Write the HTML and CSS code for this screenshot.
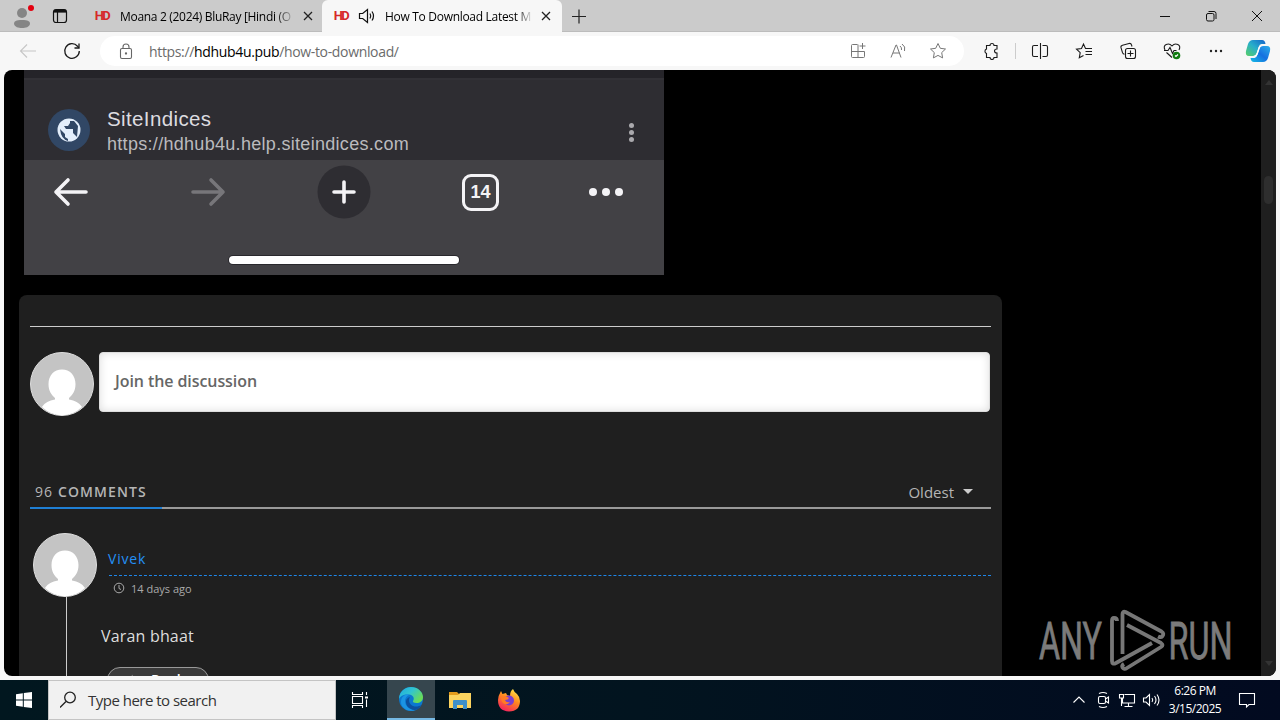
FILE: index.html
```html
<!DOCTYPE html>
<html lang="en">
<head>
  <meta charset="UTF-8">
  <meta name="viewport" content="width=device-width, initial-scale=1.0">
  <link rel="stylesheet" href="styles.css">
  <title>How To Download Latest Movies</title>
</head>
<body>
  <!-- Tab strip -->
  <div class="tabstrip">
    <div class="cell profile">
      <svg width="28" height="28" viewBox="0 0 28 28"><g fill="#858585"><circle cx="14" cy="11" r="5"/><path d="M6 22c0-3 2-4 8-4s8 1 8 4c-1 3-4 4-8 4s-7-1-8-4z"/></g><circle cx="23" cy="6" r="3" fill="#e3000f"/></svg>
    </div>
    <div class="cell tabs-menu">
      <svg width="16" height="16" viewBox="0 0 16 16" fill="none" stroke="#111" stroke-width="1.2"><rect x="1.5" y="1.5" width="13" height="13" rx="2.5"/><path d="M1.5 4h13M5.5 4v10"/><path d="M2 3h12" stroke-width="2.4"/></svg>
    </div>
    <div class="tab">
      <span class="hd">HD</span>
      <span class="tab-title first">Moana 2 (2024) BluRay [Hindi (O</span>
      <svg class="close" width="10" height="10" viewBox="0 0 10 10"><path d="M1 1l8 8M9 1l-8 8"/></svg>
    </div>
    <div class="tab active">
      <span class="hd">HD</span>
      <svg class="sound" width="18" height="16" viewBox="0 0 18 16" fill="none" stroke="#111" stroke-width="1.2"><path d="M1.5 5.5h3.2L9.5 1.5v13L4.7 10.5H1.5z"/><path d="M12 5.5q1.5 2.500 0 5M14 3.500q3 4.500 0 9"/></svg>
      <span class="tab-title second">How To Download Latest M</span>
      <svg class="close" width="10" height="10" viewBox="0 0 10 10"><path d="M1 1l8 8M9 1l-8 8"/></svg>
    </div>
    <div class="cell new-tab">
      <svg width="16" height="16" viewBox="0 0 16 16" stroke="#222" stroke-width="1.2"><path d="M1 8.500h14M8 1.500v14"/></svg>
    </div>
    <div class="window-buttons">
      <svg width="46" height="32" viewBox="0 0 46 32"><path d="M18 16.500h10"/></svg>
      <svg width="46" height="32" viewBox="0 0 46 32"><rect x="18.500" y="13.500" width="7.500" height="7.500" rx="1.500"/><path d="M20.500 11.500h5.500q2 0 2 2v5.500"/></svg>
      <svg width="46" height="32" viewBox="0 0 46 32"><path d="M18 11l10 10M28 11l-10 10"/></svg>
    </div>
  </div>

  <!-- Toolbar -->
  <div class="toolbar">
    <div class="cell back"><svg width="18" height="16" viewBox="0 0 18 16" fill="none" stroke="#c6c6c6" stroke-width="1.1"><path d="M17 8H1.500M8 1.500L1.500 8 8 14.500"/></svg></div>
    <div class="cell reload"><svg width="18" height="18" viewBox="0 0 18 18" fill="none" stroke="#1b1b1b" stroke-width="1.3"><path d="M16.300 9A7.300 7.300 0 1 1 14.500 4.200L15.800 5.800"/><path d="M16 1.500v4.500h-4.500"/></svg></div>
    <div class="address">
      <svg class="lock" width="14" height="17" viewBox="0 0 14 17" fill="none" stroke="#666" stroke-width="1.1"><rect x="1.500" y="5.500" width="11" height="10" rx="1.500"/><path d="M4 5.500V4a3 3 0 0 1 6 0v1.500"/><circle cx="7" cy="10.500" r=".6" fill="#555"/></svg>
      <span class="url">https://<b>hdhub4u.pub</b>/how-to-download/</span>
      <div class="address-icons">
        <svg width="18" height="16" viewBox="0 0 16 16"><path d="M7.500 1.500h-5a1 1 0 0 0-1 1v11a1 1 0 0 0 1 1h11a1 1 0 0 0 1-1v-5h-13M8 1.500v13M12.500 0v6M9.500 3h6"/></svg>
        <svg width="16" height="16" viewBox="0 0 16 16"><path d="M1 14.500L6 2h.5l4.500 12.500M3 10h6.500M10 3q2 1.500 1.500 4M12 1q4 2.500 2.500 7"/></svg>
        <svg width="18" height="18" viewBox="0 0 18 18"><path d="M9 1.500l2.300 4.800 5.200.7-3.800 3.600.9 5.300L9 13.400l-4.600 2.500.9-5.300L1.500 7l5.200-.7z"/></svg>
      </div>
    </div>
    <div class="tools">
      <svg class="puzzle" width="18" height="18" viewBox="0 0 18 18"><path d="M4.500 3.500H8a2 2 0 0 1 4 0h3V7q-2.500 0-2.500 2t2.500 2v4.500h-3a2 2 0 0 1-4 0H4.500V11.500a2.400 2.400 0 0 1 0-4.500z"/></svg>
      <span class="divider"></span>
      <svg width="18" height="18" viewBox="0 0 18 18"><path d="M7 3.500H3a1.500 1.500 0 0 0-1.500 1.500v8A1.500 1.500 0 0 0 3 14.500h4M9.500 1v16M11.500 3.500H15a1.500 1.500 0 0 1 1.500 1.500v8a1.500 1.500 0 0 1-1.500 1.500h-3.500"/></svg>
      <svg width="18" height="18" viewBox="0 0 18 18"><path d="M16 6.500h-5.500L8.500 2 6.500 6.500l-5 .700 3.700 3.500-.9 5 4.200-2.200M10.500 6.500H17M10.500 9.500H17M10.500 12.500H17"/></svg>
      <svg width="18" height="18" viewBox="0 0 18 18"><path d="M13 4.500l-.4-1.400Q12 1 10 1.500l-6.500 1.700q-2 .5-1.500 2.500l1.500 5q.5 1.500 2 1.500"/><rect x="6.500" y="6.500" width="10" height="10" rx="2"/><path d="M11.500 8.500v6M8.500 11.500h6"/></svg>
      <svg width="18" height="18" viewBox="0 0 18 18"><path d="M2 8Q0 4 3.200 2.500 6.500 1 9 4q2.500-3 5.800-1.500Q18 4 16 8M1 8.500h4l2-3 2.500 6L11 8.500h2.500M3.500 10.500l5.500 5"/><circle cx="13.500" cy="13.500" r="3.800" fill="#107c10" stroke="none"/><path d="M12 13.500l1 1 2-2" stroke="#fff"/></svg>
      <svg width="18" height="18" viewBox="0 0 18 18"><g fill="#222" stroke="none"><circle cx="3" cy="9" r="1.200"/><circle cx="8" cy="9" r="1.200"/><circle cx="13" cy="9" r="1.200"/></g></svg>
      <svg class="copilot" width="26" height="24" viewBox="0 0 26 24">
        <defs>
          <linearGradient id="cpA" x1="0" y1="1" x2="1" y2="0"><stop offset="0" stop-color="#58cf65"/><stop offset=".5" stop-color="#28aecb"/><stop offset="1" stop-color="#1462c9"/></linearGradient>
          <linearGradient id="cpB" x1="0" y1="1" x2="1" y2="0"><stop offset="0" stop-color="#16bce6"/><stop offset=".5" stop-color="#1670e0"/><stop offset="1" stop-color="#2dafe9"/></linearGradient>
        </defs>
        <path d="M8 1h9q3 0 3.500 4h-4q-2 0-2.800 3l-2 6q-1 3-4 3H4q-4 0-3-5l2-7q1.500-4 5-4z" fill="url(#cpA)" stroke="none"/>
        <path d="M18 23H9q-3 0-3.500-4h4q2 0 2.800-3l2-6q1-3 4-3H22q4 0 3 5l-2 7q-1.500 4-5 4z" fill="url(#cpB)" stroke="none"/>
        <path d="M13.700 8l-2 6q-.8 3-3 3h2.500q1.500-1 2-3l2-6q.6-1 1.600-1H16q-1.600 0-2.300 1z" fill="#fff" stroke="none"/>
      </svg>
    </div>
  </div>

  <!-- Web page -->
  <div class="viewport">
    <div class="page">
      <div class="phone">
        <div class="phone-top"></div>
        <div class="site">
          <svg class="globe" width="42" height="42" viewBox="0 0 42 42"><circle cx="21" cy="21" r="21" fill="#314765"/><circle cx="21" cy="21" r="11.500" fill="#e3eefb"/><path d="M22 12h4l4 5-1 11-4-4v-4h-7l-2-3h4l2-3zM12 20l5 5v3l3 2v2q-7-2-8-12z" fill="#314765"/></svg>
          <div class="site-text">
            <div class="site-name">SiteIndices</div>
            <div class="site-url">https://hdhub4u.help.siteindices.com</div>
          </div>
          <div class="kebab"><i></i><i></i><i></i></div>
        </div>
        <div class="phone-nav">
          <svg width="36" height="30" viewBox="0 0 36 30" stroke="#f4f3f6"><path d="M33 15H3M15 3L3 15l12 12"/></svg>
          <svg class="forward" width="36" height="30" viewBox="0 0 36 30" stroke="#77767a"><path d="M3 15h30M21 3l12 12-12 12"/></svg>
          <svg class="plus" width="54" height="54" viewBox="0 0 54 54" stroke="#f4f3f6"><circle cx="27" cy="27" r="26.500" fill="#2e2d32" stroke="none"/><path d="M17 27h20M27 17v20"/></svg>
          <span class="count">14</span>
          <div class="more"><i></i><i></i><i></i></div>
        </div>
        <div class="home-bar"></div>
      </div>

      <div class="comments">
        <hr>
        <div class="join">
          <svg class="avatar" viewBox="0 0 64 64"><circle cx="32" cy="32" r="31.500" fill="#c4c4c4" stroke="#ddd"/><path d="M32 17.500c8 0 13.500 6 13.500 14.500 0 7-3 11-6.500 14v1.500c6 1 10 3 13 7.500Q43 63.300 32 63.300T12 55c3-4.500 7-6.500 13-7.500V46c-3.500-3-6.500-7-6.500-14 0-8.500 5.500-14.500 13.500-14.500z" fill="#fff"/></svg>
          <div class="join-box">Join the discussion</div>
        </div>
        <div class="threads-head">
          <div class="threads-count">96 <b>COMMENTS</b></div>
          <div class="sort">Oldest <span class="caret"></span></div>
        </div>
        <div class="comment">
          <div class="comment-left">
            <svg class="avatar" viewBox="0 0 64 64"><circle cx="32" cy="32" r="31.500" fill="#c4c4c4" stroke="#ddd"/><path d="M32 17.500c8 0 13.500 6 13.500 14.500 0 7-3 11-6.500 14v1.500c6 1 10 3 13 7.500Q43 63.300 32 63.300T12 55c3-4.500 7-6.500 13-7.500V46c-3.500-3-6.500-7-6.500-14 0-8.500 5.500-14.500 13.500-14.500z" fill="#fff"/></svg>
            <div class="thread-line"></div>
          </div>
          <div class="comment-right">
            <div class="author">Vivek</div>
            <div class="date"><svg width="12" height="12" viewBox="0 0 12 12" fill="none" stroke="#aaa"><circle cx="6" cy="6" r="4.800"/><path d="M6 3v3.500l2 1"/></svg><span>14 days ago</span></div>
            <div class="text">Varan bhaat</div>
            <div class="reply"><svg width="16" height="12" viewBox="0 0 16 12" fill="none" stroke="#777"><path d="M6 1L1 5l5 4M1 5h8q4 0 5 5"/></svg>Reply</div>
          </div>
        </div>
      </div>
    </div>
    <div class="scrollbar">
      <span class="arrow up"></span>
      <span class="thumb"></span>
      <span class="arrow down"></span>
    </div>
    <svg class="watermark" width="196" height="64" viewBox="0 0 196 64">
      <g font-family="Roboto, sans-serif" font-size="51" fill="#7b7b7b" stroke="#7b7b7b" stroke-width=".8">
        <text x="3" y="50" textLength="63" lengthAdjust="spacingAndGlyphs">ANY</text>
        <text x="132.500" y="50" textLength="64" lengthAdjust="spacingAndGlyphs">RUN</text>
      </g>
      <g fill="none" stroke="#777" stroke-width="3.800" stroke-linejoin="round">
        <path d="M81 12q0-3-3-3-2 0-2 3v40q0 4 4 2l36-20"/>
        <path d="M86.500 45V5q0-3 3-2l36 19.500q3 2 1 4.500-1.500 2-4.500.5"/>
        <path d="M91 16l34 18q3 2 0 4L91 59q-3 2-4.500-.5-1-2 1.500-3.500"/>
      </g>
    </svg>
  </div>

  <!-- Taskbar -->
  <div class="taskbar">
    <div class="task start"><svg width="16" height="16" viewBox="0 0 16 16" fill="#fff"><path d="M0 2.300l6.800-1v6.200H0zM7.800 1.100L16 0v7.500H7.800zM0 8.500h6.800v6.300L0 13.800zM7.800 8.500H16V16l-8.200-1.100z"/></svg></div>
    <div class="search">
      <svg width="18" height="18" viewBox="0 0 18 18" fill="none" stroke="#222" stroke-width="1.3"><circle cx="10" cy="6.500" r="5.300"/><path d="M6 10.500L0 16.500"/></svg>
      <span>Type here to search</span>
    </div>
    <div class="task"><svg width="18" height="18" viewBox="0 0 18 18" fill="none" stroke="#fff" stroke-width="1.1"><path d="M1.500 1v2.500h10V1M1.500 17v-2.500h10V17M1.500 5.500h10v7h-10zM15.500 1v3M15.500 8.500V16"/><path d="M14 5.500h3v2h-3z" fill="#fff" stroke="none"/></svg></div>
    <div class="task current"><svg width="26" height="26" viewBox="0 0 26 26">
      <defs><linearGradient id="edgeTop" x1="0" y1="0" x2="1" y2=".6"><stop offset="0" stop-color="#1fa9e0"/><stop offset=".5" stop-color="#31c4d1"/><stop offset="1" stop-color="#6bdc54"/></linearGradient></defs>
      <circle cx="13" cy="13" r="12" fill="#0b78d0"/>
      <path d="M1 12C2 5 7 1 13 1c7 0 12 5 12 10 0 4-3 6-6.500 6-2.500 0-4-1-3.500-2 2-3 0-6-4-6.500C6 8 2 10 1 13z" fill="url(#edgeTop)"/>
      <path d="M11 9c-4 2-5 6-3 10 2 3.500 6 5 9 5-4 2-10 .5-13-4-2-4-1-9 3-11 1.500-.6 3-.5 4 0z" fill="#1b94e4"/>
      <path d="M12 11c-2 3-1 7 3 9 3 1 6 .5 8.500-1-2 3.500-4.500 5-7 5-5-.5-9-4-8.500-9 .3-2 2-3.600 4-4z" fill="#0c509e"/>
    </svg></div>
    <div class="task explorer"><svg width="22" height="20" viewBox="0 0 22 20"><path d="M0 2h8l2 2v3H0z" fill="#e39b1c"/><path d="M0 5h9l2-2h11v15H0z" fill="#fbd35f"/><path d="M4 19v-8q0-1 1-1h12q1 0 1 1v8h-4v-4H8v4z" fill="#3d8fc9"/></svg></div>
    <div class="task firefox"><svg width="24" height="24" viewBox="0 0 24 24">
      <defs><linearGradient id="fire" x1=".8" y1="0" x2=".3" y2="1"><stop offset="0" stop-color="#ffe94a"/><stop offset=".45" stop-color="#ff8a1f"/><stop offset="1" stop-color="#f5205f"/></linearGradient></defs>
      <path d="M4 3l1.500 3L9 5l1 2 3 1q0-5 3-7 1 3 4 5 3 3 3 7 0 10-11 10.500Q1 23 1 12q0-4 3-9z" fill="url(#fire)"/>
      <circle cx="12" cy="12.500" r="5" fill="#7a3ed0"/>
      <path d="M4 9q5-2 8 1-1 2-4 2 1 3 5 2-3 4-7 1-2-2-2-6z" fill="#ff7b24"/>
    </svg></div>
    <div class="tray">
      <svg width="24" height="24" viewBox="0 0 24 24"><path d="M6.500 14.500L12 9l5.500 5.500"/></svg>
      <svg width="24" height="24" viewBox="0 0 24 24"><rect x="7.500" y="8.500" width="7" height="7" rx="1.500"/><path d="M14.500 11l3-2v6l-3-2M8 5.500q4-2 8 0M8 18.500q4 2 8 0"/></svg>
      <svg width="24" height="24" viewBox="0 0 24 24"><path d="M9.500 6.500h10v8.500h-12V10M13.500 15v3.500M9.500 18.500h8M4.500 6.500h4v3.500h-4zM6.500 10v8"/></svg>
      <svg width="24" height="24" viewBox="0 0 24 24"><path d="M4.500 10h2.500l3.500-3.500v11L7 14H4.500zM13 10q1.500 2 0 4M15.500 8q3 4 0 8M18 6.500q4 5.500 0 11"/></svg>
      <div class="clock"><span>6:26 PM</span><span>3/15/2025</span></div>
      <svg class="notice" width="20" height="20" viewBox="0 0 20 20"><path d="M2.500 3.500h15v11H12L9.500 17v-2.500h-7z"/></svg>
    </div>
  </div>
</body>
</html>
```
FILE: styles.css
```css
* {
  box-sizing: border-box;
}

body {
  margin: 0;
  width: 1280px;
  height: 720px;
  overflow: hidden;
  display: flex;
  flex-direction: column;
  font-family: "Open Sans", "Noto Sans", sans-serif;
  background: #f7f7f7;
}

svg {
  flex-shrink: 0;
}

.cell {
  display: flex;
  align-items: center;
  justify-content: center;
  flex-shrink: 0;
}

/* Tab strip */
.tabstrip {
  display: flex;
  height: 32px;
  background: #cbcbcb;
  border-bottom: 1px solid #bcbcbc;
  flex-shrink: 0;
}

.profile {
  width: 44px;
}

.tabs-menu {
  width: 32px;
  margin-right: 10px;
}

.tab {
  width: 236px;
  height: 32px;
  padding-left: 8px;
  display: flex;
  align-items: center;
  font-size: 12px;
  color: #000;
}

.tab.active {
  width: 240px;
  padding-left: 11px;
  background: #f7f7f7;
  border-radius: 6px 6px 0 0;
}

.hd {
  width: 16px;
  font: bold 13px/14px "Roboto", sans-serif;
  letter-spacing: -1.5px;
  color: #d62828;
  text-align: center;
}

.sound {
  margin-left: 9px;
}

.tab-title {
  margin-left: 10px;
  white-space: nowrap;
  -webkit-mask-image: linear-gradient(to right, #000 89%, transparent);
}

.first {
  width: 175px;
  letter-spacing: -0.31px;
}

.second {
  width: 148px;
  margin-left: 9px;
  letter-spacing: -0.3px;
}

.close {
  margin-left: 8px;
  stroke: #222;
  stroke-width: 1.3;
}

.new-tab {
  width: 34px;
}

.window-buttons {
  display: flex;
  margin-left: auto;
  fill: none;
  stroke: #111;
}

/* Toolbar */
.toolbar {
  display: flex;
  align-items: center;
  height: 38px;
  flex-shrink: 0;
}

.back {
  width: 56px;
}

.reload {
  width: 32px;
}

.address {
  width: 864px;
  height: 30px;
  margin-left: 12px;
  padding: 0 17px 0 19px;
  display: flex;
  align-items: center;
  border-radius: 15px;
  background: #fff;
}

.url {
  margin-left: 16px;
  font-size: 14px;
  letter-spacing: -0.34px;
  color: #6b6b6b;
}

.url b {
  font-weight: normal;
  color: #000;
}

.address-icons {
  display: flex;
  align-items: center;
  gap: 23px;
  margin-left: auto;
  fill: none;
  stroke: #777;
}

.tools {
  display: flex;
  align-items: center;
  gap: 26.3px;
  margin-left: 18px;
  fill: none;
  stroke: #1b1b1b;
  stroke-width: 1.1;
}

.divider {
  width: 1px;
  height: 16px;
  margin: 0 -11.5px;
  background: #ccc;
}

.copilot {
  margin-left: -7px;
}

/* Web page */
.viewport {
  position: relative;
  display: flex;
  height: 606px;
  margin: 0 4px 4px;
  flex-shrink: 0;
  overflow: hidden;
  border-radius: 8px;
  background: #000;
}

.page {
  width: 1257px;
  padding-left: 15px;
}

.phone {
  width: 640px;
  height: 205px;
  margin-left: 5px;
  background: #424145;
  font-family: "Liberation Sans", Arial, sans-serif;
}

.phone-top {
  height: 10px;
  background: #252429;
  border-bottom: 2px solid #323136;
}

.site {
  display: flex;
  height: 80px;
  padding: 26px 0 0 24px;
  background: #2e2d32;
}

.globe {
  margin-top: 3px;
}

.site-text {
  margin-left: 17px;
}

.site-name {
  font-size: 20.5px;
  line-height: 25px;
  letter-spacing: 0.38px;
  color: #dddce0;
}

.site-url {
  font-size: 18px;
  line-height: 27px;
  letter-spacing: 0.3px;
  color: #bbbabe;
}

.kebab {
  display: flex;
  flex-direction: column;
  gap: 2px;
  margin: 17px 30px 0 auto;
}

.kebab i {
  width: 5px;
  height: 5px;
  border-radius: 50%;
  background: #aaa9ad;
}

.phone-nav {
  display: flex;
  align-items: center;
  height: 64px;
  padding-left: 29px;
  fill: none;
  stroke-width: 3.6;
  stroke-linecap: round;
  stroke-linejoin: round;
}

.forward {
  margin-left: 101px;
}

.plus {
  margin-left: 91px;
}

.count {
  width: 37px;
  height: 37px;
  margin-left: 91px;
  border: 3px solid #f4f3f6;
  border-radius: 9px;
  font-size: 18px;
  font-weight: bold;
  line-height: 31px;
  text-align: center;
  color: #f4f3f6;
}

.more {
  display: flex;
  gap: 5px;
  margin-left: 90px;
}

.more i {
  width: 8px;
  height: 8px;
  border-radius: 50%;
  background: #f4f3f6;
}

.home-bar {
  width: 230px;
  height: 8px;
  margin: 32px 0 0 205px;
  border-radius: 4px;
  background: #fff;
  box-shadow: 0 0 0 1px #29282d;
}

/* Comments */
.comments {
  width: 983px;
  height: 420px;
  margin-top: 20px;
  padding: 31px 11px 0;
  border-radius: 8px;
  background: #1f1f1f;
}

.comments hr {
  height: 1px;
  margin: 0;
  border: 0;
  background: #ccc;
}

.join {
  display: flex;
  gap: 5px;
  margin-top: 25px;
}

.avatar {
  display: block;
  width: 64px;
  height: 64px;
}

.join-box {
  width: 891px;
  height: 60px;
  padding-left: 15px;
  border: 1px solid #ddd;
  border-radius: 4px;
  background: #fff;
  box-shadow: inset 0 0 8px #ddd;
  font-size: 16px;
  font-weight: 600;
  line-height: 57px;
  letter-spacing: -0.08px;
  color: #666;
}

.threads-head {
  display: flex;
  justify-content: space-between;
  height: 33px;
  margin-top: 60px;
  border-bottom: 2px solid #999;
  color: #b5b5b5;
}

.threads-count {
  width: 132px;
  height: 33px;
  padding-left: 5px;
  border-bottom: 2px solid #1f7fd4;
  font-size: 14px;
  line-height: 32px;
  letter-spacing: 1.1px;
  white-space: nowrap;
}

.threads-count b {
  font-weight: 600;
}

.sort {
  display: flex;
  align-items: center;
  gap: 9px;
  padding-right: 18px;
  font-size: 15px;
}

.caret {
  border: 5px solid transparent;
  border-top-color: #ccc;
  border-bottom: 0;
}

.comment {
  display: flex;
  margin-top: 24px;
  padding-left: 3px;
}

.thread-line {
  width: 1px;
  height: 90px;
  margin-left: 33px;
  background: #ccc;
}

.comment-right {
  width: 894px;
  padding: 10px 0 0 4px;
}

.author {
  height: 33px;
  margin-left: 8px;
  border-bottom: 1px dashed #1f86e8;
  font-size: 14px;
  line-height: 32px;
  letter-spacing: 0.8px;
  text-indent: -1px;
  color: #2490f5;
}

.date {
  display: flex;
  align-items: center;
  gap: 6px;
  height: 24px;
  margin-left: 12px;
  font-size: 11px;
  color: #aaa;
}

.text {
  height: 67px;
  font-size: 16px;
  line-height: 72px;
  letter-spacing: 0.18px;
  color: #ddd;
}

.reply {
  display: flex;
  align-items: center;
  gap: 8px;
  width: 102px;
  height: 26px;
  margin-left: 6px;
  padding-left: 19px;
  border: 1px solid #999;
  border-radius: 13px;
  background: #3a3a3a;
  font-size: 14px;
  font-weight: 600;
  line-height: 24px;
  color: #fff;
}

.scrollbar {
  width: 15px;
  padding: 10px 3px 0;
  display: flex;
  flex-direction: column;
  align-items: center;
  background: #1f1f1f;
}

.arrow {
  border: 4px solid transparent;
}

.up {
  border-top: 0;
  border-bottom: 5px solid #333;
}

.thumb {
  width: 9px;
  height: 28px;
  margin-top: 91px;
  border-radius: 5px;
  background: #2e2e2e;
}

.down {
  margin: auto 0 10px;
  border-bottom: 0;
  border-top: 5px solid #333;
}

.watermark {
  position: absolute;
  left: 1032px;
  top: 539px;
}

/* Taskbar */
.taskbar {
  display: flex;
  height: 40px;
  flex-shrink: 0;
  background: linear-gradient(to right, #01171f, #02141f 50%, #020a20);
}

.task {
  width: 48px;
  display: flex;
  align-items: center;
  justify-content: center;
}

.search {
  width: 288px;
  padding-left: 11px;
  display: flex;
  align-items: center;
  gap: 10px;
  border: 1px solid #c4c4c4;
  background: #f1f1f1;
  font-size: 15px;
  letter-spacing: -0.51px;
  color: #333;
}

.current {
  margin-left: 3px;
  border-bottom: 2px solid #76b9e4;
  background: #36464e;
}

.explorer {
  margin-left: 1px;
}

.firefox {
  margin-left: 1px;
}

.tray {
  display: flex;
  align-items: center;
  margin-left: auto;
  padding-right: 23px;
  fill: none;
  stroke: #fff;
  stroke-width: 1.1;
}

.clock {
  width: 64px;
  display: flex;
  flex-direction: column;
  align-items: center;
  font-size: 12px;
  line-height: 18px;
  letter-spacing: -0.5px;
  color: #fff;
}

.notice {
  margin-left: 10px;
}
```
